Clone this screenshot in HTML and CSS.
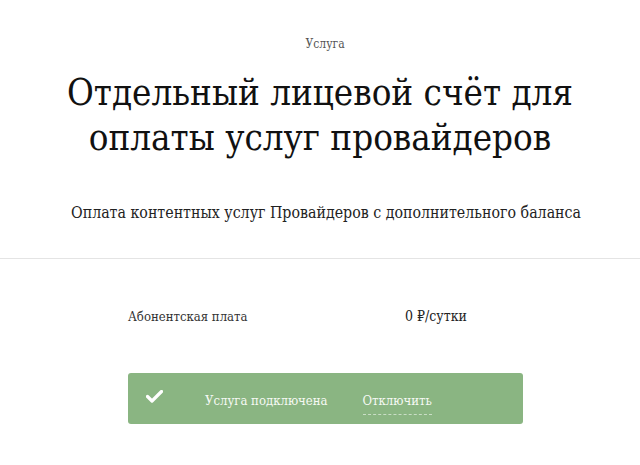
FILE: index.html
```html
<!DOCTYPE html>
<html lang="ru">
<head>
<meta charset="utf-8">
<link rel="stylesheet" href="styles.css">
</head>
<body>
<header class="hero">
  <div class="kicker">Услуга</div>
  <h1 class="title">Отдельный лицевой счёт для оплаты услуг провайдеров</h1>
  <p class="lead">Оплата контентных услуг Провайдеров с дополнительного баланса</p>
</header>
<section class="details">
  <div class="fee-row">
    <span class="fee-label">Абонентская плата</span>
    <span class="fee-value">0 ₽/сутки</span>
  </div>
  <div class="status">
    <svg class="check" width="17" height="13" viewBox="0 0 17 13"><path d="M1.5 6.5 L6 11 L15.5 1.5" fill="none" stroke="#fff" stroke-width="3.2" stroke-linecap="round" stroke-linejoin="round"/></svg>
    <span class="status-text">Услуга подключена</span>
    <a class="status-link">Отключить</a>
  </div>
</section>
</body>
</html>
```
FILE: styles.css
```css
html, body { margin: 0; padding: 0; background: #fff; }
body {
  font-family: "DejaVu Serif Condensed", "DejaVu Serif", "Liberation Serif", serif;
  color: #1a1a1a;
  width: 640px;
}
.hero {
  display: flex;
  flex-direction: column;
  align-items: center;
  text-align: center;
  padding: 36px 0 35px;
  border-bottom: 1px solid #e4e4e4;
}
.kicker {
  font-size: 12px;
  color: #555;
  line-height: 16px;
  margin-left: 10px;
}
.title {
  margin: 18px 0 0;
  font-weight: normal;
  font-size: 36.4px;
  line-height: 45px;
  width: 540px;
  color: #111;
}
.lead {
  margin: 43px 0 0 12px;
  font-size: 15.8px;
  line-height: 20px;
  color: #222;
}
.details {
  padding: 49px 0 0 128px;
}
.fee-row {
  display: flex;
  align-items: baseline;
  font-size: 13px;
  color: #333;
  height: 20px;
}
.fee-label { width: 277px; }
.fee-value { font-size: 14px; color: #222; }
.status {
  margin-top: 45px;
  width: 395px;
  height: 51px;
  background: #8ab582;
  border-radius: 3px;
  display: flex;
  align-items: center;
  color: #f6f9f4;
  font-size: 13px;
}
.check { margin-left: 18px; margin-right: 42px; margin-top: -4px; }
.status-text,
.status-link {
  line-height: 16px;
  padding: 10px 0 5px;
  border-bottom: 1px solid transparent;
}
.status-text { margin-right: 35px; }
.status-link {
  border-bottom: 1px dashed rgba(255,255,255,0.55);
  cursor: pointer;
}
```
